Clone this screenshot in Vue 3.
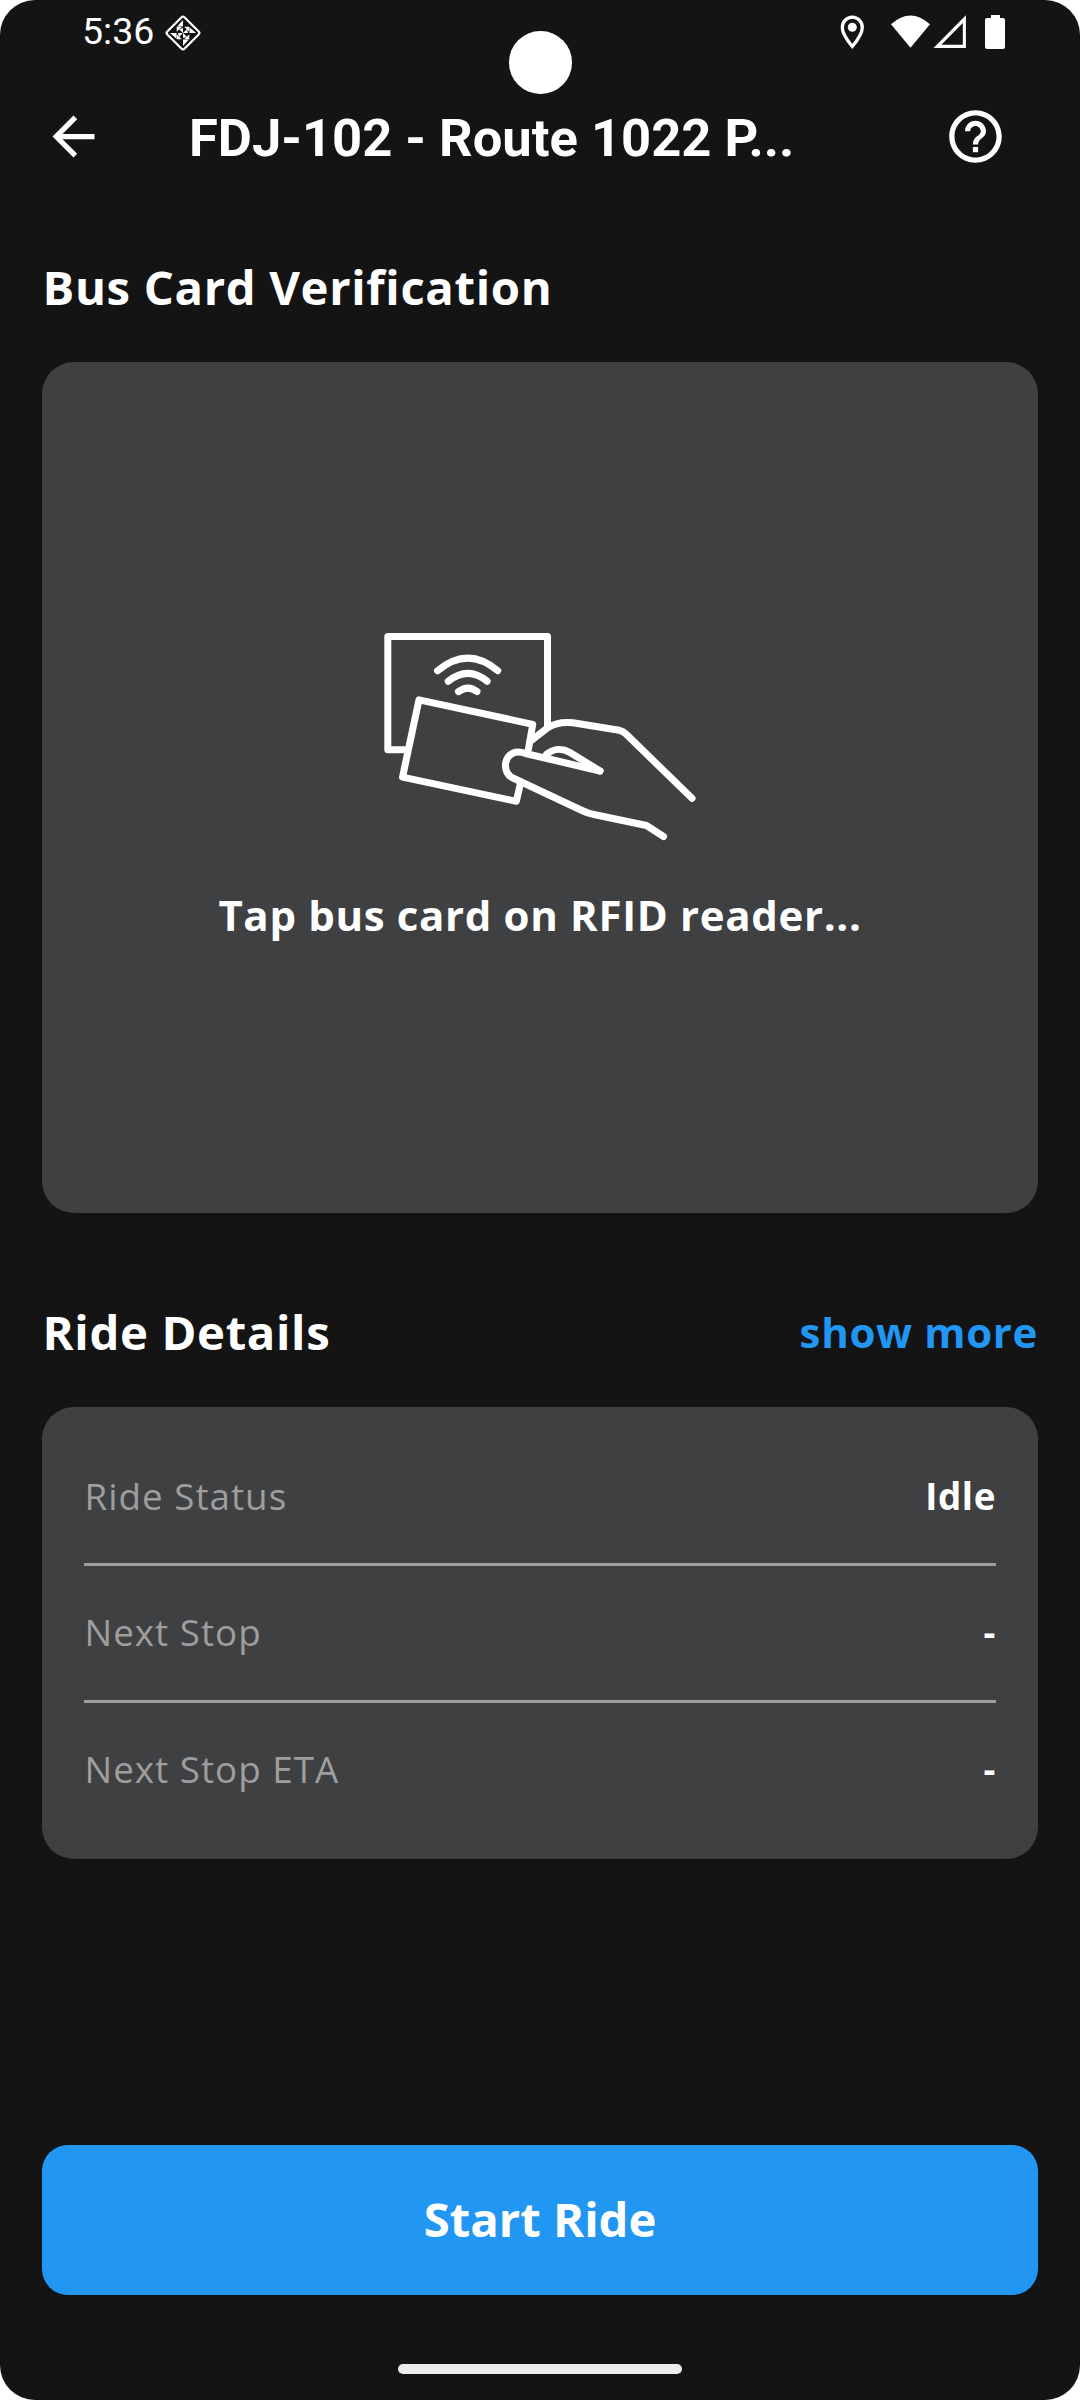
<script setup>
const rows = [
  { label: 'Ride Status', value: 'Idle' },
  { label: 'Next Stop', value: '-' },
  { label: 'Next Stop ETA', value: '-' },
]
const quarterTurns = [0, 90, 180, 270]
</script>

<template>
  <div class="screen">
    <div class="camera"></div>

    <header class="status">
      <span class="time">5:36</span>
      <svg class="diamond" viewBox="-19 -19 38 38" width="38" height="38">
        <rect x="-12.100" y="-12.100" width="24.200" height="24.200" rx="2" transform="rotate(45)" fill="none" stroke="#fff" stroke-width="2.200" />
        <path v-for="a in quarterTurns" :key="a" :transform="`rotate(${a})`" fill="#fff" d="M0-13V-6.500H-5.800zM0 0V-5L-4-4zM1.200-6.300H6.300V-1.200z" />
      </svg>
      <svg class="icons" viewBox="0 0 170 38" width="170" height="38">
        <path fill="none" stroke="#fff" stroke-width="3.300" d="M17.300 32.500C11.500 25.500 7.300 19.500 7.300 13.500a10 10.400 0 0 1 20 0C27.300 19.500 23.100 25.500 17.300 32.500z" />
        <circle cx="17.300" cy="13.300" r="4.500" fill="#fff" />
        <path fill="#fff" d="M56 10.300Q75.500-7.200 95 10.300L75.500 33.700z" />
        <path fill="#fff" fill-rule="evenodd" d="M130.900 1.200V34H98.500zM127.800 8.900L106.300 30.700h21.500z" />
        <path fill="#fff" d="M156 1h9v3h3a2 2 0 0 1 2 2v27a2 2 0 0 1-2 2h-16a2 2 0 0 1-2-2V6a2 2 0 0 1 2-2h4z" />
      </svg>
    </header>

    <nav class="appbar">
      <svg viewBox="0 0 24 24" width="63" height="63">
        <path fill="#fff" d="M20 11H7.830l5.590-5.590L12 4l-8 8 8 8 1.410-1.410L7.830 13H20v-2z" />
      </svg>
      <h1>FDJ-102 - Route 1022 P...</h1>
      <svg viewBox="0 0 24 24" width="63" height="63">
        <path fill="#fff" d="M11 18h2v-2h-2v2zm1-16C6.480 2 2 6.480 2 12s4.480 10 10 10 10-4.480 10-10S17.520 2 12 2zm0 18c-4.410 0-8-3.590-8-8s3.590-8 8-8 8 3.590 8 8-3.590 8-8 8zm0-14c-2.210 0-4 1.790-4 4h2c0-1.100.9-2 2-2s2 .9 2 2c0 2-3 1.750-3 5h2c0-2.250 3-2.500 3-5 0-2.210-1.790-4-4-4z" />
      </svg>
    </nav>

    <main>
      <h2>Bus Card Verification</h2>
      <section class="card reader">
        <svg class="tap" viewBox="0 0 340 250" width="340" height="250" fill="none" stroke="#fff" stroke-width="7" stroke-linecap="round" stroke-linejoin="round">
          <path d="M35 139.700H17.800V26.500H177.500V117" />
          <path d="M67.500 60.700Q98 35.500 127.700 60.700M78.200 71.300Q98 55.500 117.200 71.300M88.500 81.600Q98 74.500 107 81.600" />
          <path d="M158.500 139L162.700 114.300 49 89.800 32.500 167.200 146.300 191.300 150.800 172" />
          <path d="M160 131.500L178 117.500C185 113 193 111.700 203 112.700L249 120.200Q253 121 256 124L322 188.300" />
          <path d="M230 161L155.500 143.500C146 140 137.500 143 135.500 153.500C135 160 137 165.500 144 168.500L212 200.500Q218 203.500 224 204.500L276.500 215.500 293.500 226.500" />
          <path d="M176.500 144.500C184 138 193 138.500 200 142.500L230 161" />
        </svg>
        <p>Tap bus card on RFID reader...</p>
      </section>

      <div class="details-head">
        <h2>Ride Details</h2>
        <a>show more</a>
      </div>
      <section class="card details">
        <div v-for="row in rows" :key="row.label" class="row">
          <span>{{ row.label }}</span>
          <b>{{ row.value }}</b>
        </div>
      </section>

      <button class="start">Start Ride</button>
    </main>
    <div class="home"></div>
  </div>
</template>

<style>
body {
  background: #fff;
}
</style>

<style scoped>
.screen {
  position: relative;
  box-sizing: border-box;
  width: 1080px;
  height: 2400px;
  display: flex;
  flex-direction: column;
  overflow: hidden;
  border-radius: 35px;
  background: #141414;
  color: #fff;
  font-family: "Open Sans", "Noto Sans", sans-serif;
}
.camera {
  position: absolute;
  left: 509.250px;
  top: 31.200px;
  width: 62.500px;
  height: 62.500px;
  border-radius: 50%;
  background: #fff;
}
.status {
  display: flex;
  align-items: flex-start;
  height: 91px;
  padding: 14px 75px 0 82px;
  box-sizing: border-box;
}
.time {
  width: 82px;
  font: 400 37.500px/34px Roboto, sans-serif;
}
.icons {
  margin-left: auto;
}
.appbar {
  display: flex;
  align-items: center;
  height: 91px;
  padding: 0 73.500px 0 42px;
}
h1 {
  flex: 1;
  margin: 2px 0 0 84px;
  font: 700 52.500px/62px Roboto, sans-serif;
  white-space: nowrap;
}
h2 {
  margin: 0;
  padding-left: 0.500px;
  font-size: 47.250px;
  line-height: 64px;
  font-weight: 700;
  letter-spacing: 0.656px;
  white-space: nowrap;
}
main {
  flex: 1;
  display: flex;
  flex-direction: column;
  padding: 73px 42px 0;
}
.card {
  box-sizing: border-box;
  border-radius: 32px;
  background: #3f4042;
}
.reader {
  display: flex;
  flex-direction: column;
  align-items: center;
  height: 851px;
  margin-top: 43px;
  padding-top: 248px;
}
.reader p {
  margin: 26px 0 0;
  font-size: 42px;
  line-height: 57px;
  font-weight: 700;
  letter-spacing: 0.656px;
}
.details-head {
  display: flex;
  justify-content: space-between;
  align-items: center;
  margin-top: 87px;
}
.details-head a {
  padding-bottom: 2px;
  color: #2196f3;
  font-size: 42px;
  line-height: 57px;
  font-weight: 700;
  letter-spacing: 0.656px;
}
.details {
  height: 452px;
  margin-top: 43px;
  padding: 21px 42px;
}
.row {
  box-sizing: border-box;
  display: flex;
  justify-content: space-between;
  align-items: center;
  height: 135px;
  font-size: 36.750px;
  letter-spacing: 1.020px;
}
.row + .row {
  height: 137px;
  padding-bottom: 3px;
  border-top: 3px solid #9e9e9e;
}
.row span {
  padding-left: 0.500px;
  color: #9e9e9e;
}
.row b {
  letter-spacing: 0.600px;
}
.start {
  height: 150px;
  margin-top: 286px;
  padding: 0 0 2px;
  border: 0;
  border-radius: 26px;
  background: #2196f3;
  color: #fff;
  font: 700 47.250px/64px "Open Sans", "Noto Sans", sans-serif;
}
.home {
  width: 284px;
  height: 10px;
  margin: 0 auto 26px;
  border-radius: 5px;
  background: #ececec;
}
</style>
